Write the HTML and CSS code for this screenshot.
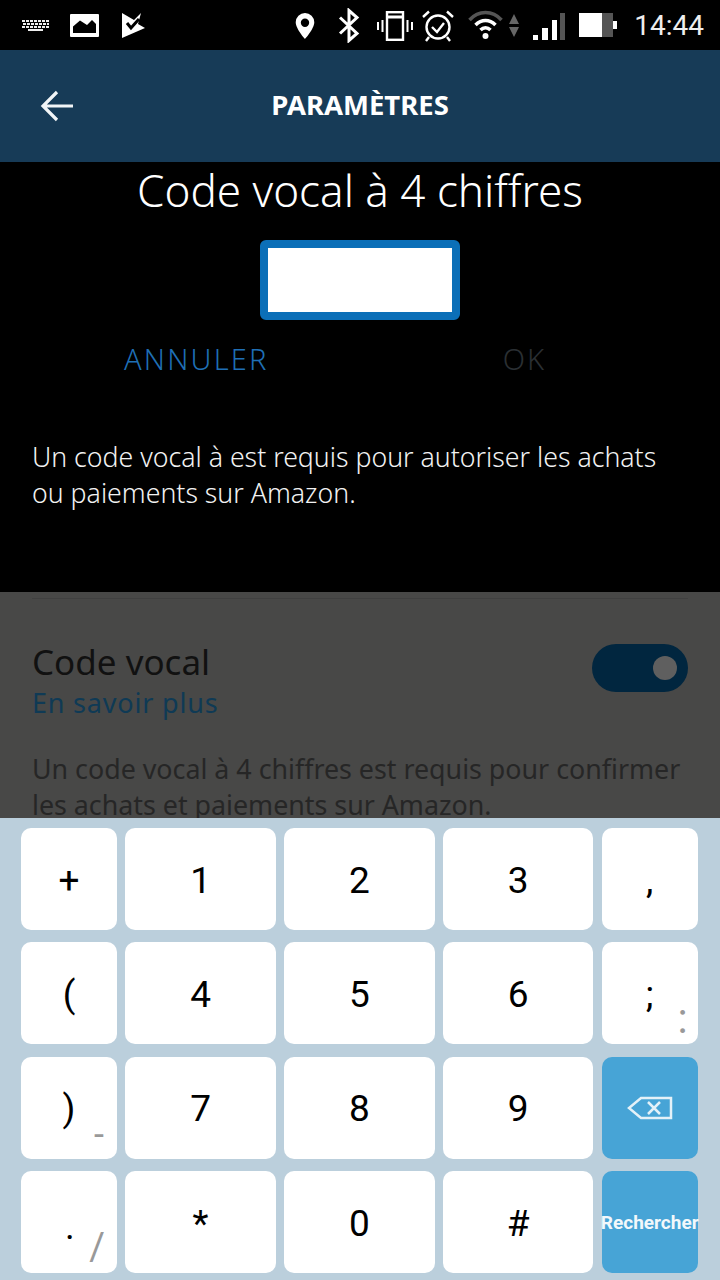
FILE: index.html
```html
<!DOCTYPE html>
<html lang="fr">
<head>
    <meta charset="UTF-8">
    <meta name="viewport" content="width=device-width, initial-scale=1.0">
    <link rel="stylesheet" href="styles.css">
    <title>Paramètres</title>
</head>
<body>
<div id="screen">
    <div class="status-bar">
        <div class="status-left">
            <svg width="28" height="14" viewBox="0 0 28 14" fill="#eee">
                <path d="M0 2h3v2H0zM4 2h3v2H4zM8 2h3v2H8zM12 2h3v2h-3zM16 2h3v2h-3zM20 2h3v2h-3zM24 2h3v2h-3zM1 5h3v2H1zM5 5h3v2H5zM9 5h3v2H9zM13 5h3v2h-3zM17 5h3v2h-3zM21 5h3v2h-3zM25 5h2v2h-2zM0 8h3v2H0zM4 8h3v2H4zM8 8h3v2H8zM12 8h3v2h-3zM16 8h3v2h-3zM20 8h3v2h-3zM24 8h3v2h-3zM6 11h15v2H6z"/>
            </svg>
            <svg class="ic-image" width="29" height="23" viewBox="0 0 29 23">
                <rect width="29" height="23" rx="1" fill="#fff"/>
                <path d="M3 19v-6.500L10 6.500l7 4.500 5-5 4 4v9z" fill="#000"/>
            </svg>
            <svg class="ic-check" width="25" height="26" viewBox="0 0 25 26">
                <path d="M1 1l12 7 7-7-3 11 7 4-23 10z" fill="#fff"/>
                <path d="M6 11l4 5 8-9" fill="none" stroke="#000" stroke-width="3"/>
            </svg>
        </div>
        <div class="status-right">
            <svg class="ic-pin" width="20" height="26" viewBox="0 0 20 28">
                <path fill-rule="evenodd" d="M10 0a10 10 0 0 1 10 10c0 7-10 18-10 18S0 17 0 10A10 10 0 0 1 10 0zm0 6a4.500 4.500 0 1 0 0 9 4.500 4.500 0 0 0 0-9z" fill="#fff"/>
            </svg>
            <svg class="gap-bt" width="22" height="35" viewBox="0 0 22 34">
                <path d="M2 9l17 16-8 7V2l8 7L2 25" fill="none" stroke="#fff" stroke-width="3"/>
            </svg>
            <svg class="gap-vib" width="36" height="30" viewBox="0 0 36 30" fill="none" stroke="#fff">
                <rect x="10" y="1.200" width="16" height="27.600" stroke-width="2.400"/>
                <path d="M11 6h14" stroke-width="3"/>
                <path d="M5.500 9v12M1 11v8M30.500 9v12M35 11v8" stroke-width="2"/>
            </svg>
            <svg class="gap-alarm" width="32" height="32" viewBox="0 0 32 32" fill="none" stroke="#fff" stroke-width="2.400">
                <circle cx="16" cy="17" r="11.500"/>
                <path d="M10 17l5 5 7-9M1 7l6-5.500M31 7l-6-5.500M7 27l-3 4M25 27l3 4"/>
            </svg>
            <svg class="gap-wifi" width="37" height="32" viewBox="0 0 36 32" fill="none" stroke-width="3.500">
                <path d="M2 12c9-10 23-10 32 0" stroke="#555"/>
                <path d="M8 17c6-6 14-6 20 0M13 22c3-3 7-3 10 0" stroke="#fff"/>
                <circle cx="18" cy="28" r="3" fill="#fff"/>
            </svg>
            <svg class="gap-arrows" width="10" height="23" viewBox="0 0 10 23" fill="#666">
                <path d="M5 0l5 10H0zM0 13h10L5 23z"/>
            </svg>
            <svg class="gap-signal" width="32" height="27" viewBox="0 0 32 27">
                <rect x="0" y="22" width="5" height="5" fill="#fff"/>
                <rect x="9" y="15" width="6" height="12" fill="#fff"/>
                <rect x="19" y="7" width="5" height="20" fill="#fff"/>
                <rect x="27" y="0" width="5" height="27" fill="#555"/>
            </svg>
            <svg class="gap-battery" width="38" height="24" viewBox="0 0 38 24">
                <rect width="23" height="24" fill="#fff"/>
                <rect x="23" width="11" height="24" fill="#555"/>
                <rect x="34" y="8" width="4" height="8" fill="#fff"/>
            </svg>
            <span class="clock">14:44</span>
        </div>
    </div>

    <div class="app-bar">
        <svg class="back" width="34" height="32" viewBox="0 0 34 32" fill="none" stroke="#f2f5f7" stroke-width="3.200">
            <path d="M34 16H4M18 2L4 16l14 14"/>
        </svg>
        <span class="app-title">PARAMÈTRES</span>
    </div>

    <div class="dialog">
        <h1>Code vocal à 4 chiffres</h1>
        <div class="pin-box"></div>
        <div class="dialog-actions">
            <span class="btn-cancel">ANNULER</span>
            <span class="btn-ok">OK</span>
        </div>
        <p class="dialog-text">Un code vocal à est requis pour autoriser les achats ou paiements sur Amazon.</p>
    </div>

    <div class="settings">
        <div class="rule"></div>
        <div class="setting-row">
            <div>
                <div class="setting-name">Code vocal</div>
                <div class="setting-link">En savoir plus</div>
            </div>
            <div class="toggle"><span class="knob"></span></div>
        </div>
        <p class="setting-text">Un code vocal à 4 chiffres est requis pour confirmer les achats et paiements sur Amazon.</p>
    </div>

    <div class="keyboard">
        <div class="key">+</div>
        <div class="key">1</div>
        <div class="key">2</div>
        <div class="key">3</div>
        <div class="key">,</div>

        <div class="key">(</div>
        <div class="key">4</div>
        <div class="key">5</div>
        <div class="key">6</div>
        <div class="key">;<span class="hint hint-colon">:</span></div>

        <div class="key">)<span class="hint hint-dash">-</span></div>
        <div class="key">7</div>
        <div class="key">8</div>
        <div class="key">9</div>
        <div class="key key-blue">
            <svg width="46" height="24" viewBox="0 0 46 24" fill="none" stroke="#e4f1f8" stroke-width="2.500">
                <path d="M14 2h30v20H14L2 12z"/>
                <path d="M21 6l12 12M33 6L21 18"/>
            </svg>
        </div>

        <div class="key key-dot">.<span class="hint hint-slash">/</span></div>
        <div class="key">*</div>
        <div class="key">0</div>
        <div class="key">#</div>
        <div class="key key-blue key-search">Rechercher</div>
    </div>
</div>
</body>
</html>
```

FILE: styles.css
```css
* {box-sizing: border-box;}
html, body {margin: 0; padding: 0;}
body {font-family: "Noto Sans", "Open Sans", sans-serif;}
#screen {width: 720px; height: 1280px; overflow: hidden; background-color: #000; display: flex; flex-direction: column;}

.status-bar {height: 50px; background-color: #000; display: flex; justify-content: space-between; align-items: center; padding: 0 16px 0 22px;}
.status-left {display: flex; align-items: center;}
.ic-image {margin-left: 20px;}
.ic-check {margin-left: 22px;}
.status-right {display: flex; align-items: center;}
.ic-pin {margin-top: 2px;}
.gap-bt {margin-left: 23px;}
.gap-vib {margin-left: 17px; margin-top: 2px;}
.gap-alarm {margin-left: 9px; margin-top: 1px;}
.gap-wifi {margin-left: 13px; margin-top: -2px;}
.gap-arrows {margin-left: 5px;}
.gap-signal {margin-left: 14px; margin-top: 3px;}
.gap-battery {margin-left: 14px;}
.clock {margin-left: 17px; font-family: "Roboto", sans-serif; font-size: 28px; color: #eee;}

.app-bar {height: 112px; background-color: #173b57; display: flex; align-items: center; justify-content: center; position: relative;}
.back {position: absolute; left: 39px; top: 40px;}
.app-title {color: #fff; font-size: 27.500px; font-weight: 700; margin-bottom: 3px;}

.dialog {height: 430px; background-color: #000; padding: 0 32px; display: flex; flex-direction: column; align-items: center;}
h1 {margin: 0; font-size: 44px; line-height: 56px; font-weight: 300; color: #fff;}
.pin-box {width: 200px; height: 80px; margin-top: 22px; background-color: #fff; border: 8px solid #0b6fb8; border-radius: 6px;}
.dialog-actions {width: 100%; display: flex; margin-top: 19px; font-size: 29px; font-weight: 300; letter-spacing: 2.200px; line-height: 40px;}
.btn-cancel {color: #1f6fb5; margin-left: 92px;}
.btn-ok {color: #2a2f33; margin-left: 234px;}
.dialog-text {margin: 60px 0 0 0; width: 100%; color: #f2f2f2; font-size: 26.700px; font-weight: 300; line-height: 36px;}

.settings {height: 226px; background-color: #484847; padding: 6px 32px 0 32px; overflow: hidden;}
.rule {height: 1px; background-color: #404040;}
.setting-row {display: flex; justify-content: space-between; align-items: flex-start; margin-top: 44px;}
.setting-name {font-size: 35px; line-height: 38px; color: #111;}
.setting-link {margin-top: 2px; font-size: 27px; line-height: 40px; color: #0f3a55; letter-spacing: 0.800px;}
.toggle {width: 96px; height: 48px; margin-top: 1px; border-radius: 24px; background-color: #01263f; position: relative;}
.knob {position: absolute; right: 11px; top: 12px; width: 24px; height: 24px; border-radius: 50%; background-color: #5f5f5f;}
.setting-text {margin: 28px 0 0 0; font-size: 26.800px; line-height: 36px; color: #262626;}

.keyboard {height: 462px; background-color: #bbcfdc; padding: 10px 22px 7px 21px; display: grid; grid-template-columns: 96px 150.400px 150.400px 150.400px 96px; grid-template-rows: repeat(4, 102px); column-gap: 8.400px; row-gap: 12.400px;}
.key {background-color: #fff; border-radius: 10px; display: flex; align-items: center; justify-content: center; padding-top: 2px; font-family: "Roboto", sans-serif; font-size: 37px; color: #000; position: relative;}
.key-blue {background-color: #47a4d6; padding-top: 0;}
.key-search {font-size: 19px; font-weight: 700; color: #f2f8fb; white-space: nowrap;}
.key-dot {padding-top: 8px; padding-left: 2px;}
.hint {position: absolute; color: #999; line-height: 1;}
.hint-colon {right: 10px; bottom: 4px; font-size: 42px;}
.hint-dash {right: 13px; bottom: 6px; font-size: 36px;}
.hint-slash {right: 12px; bottom: 7px; font-size: 38px;}
```
